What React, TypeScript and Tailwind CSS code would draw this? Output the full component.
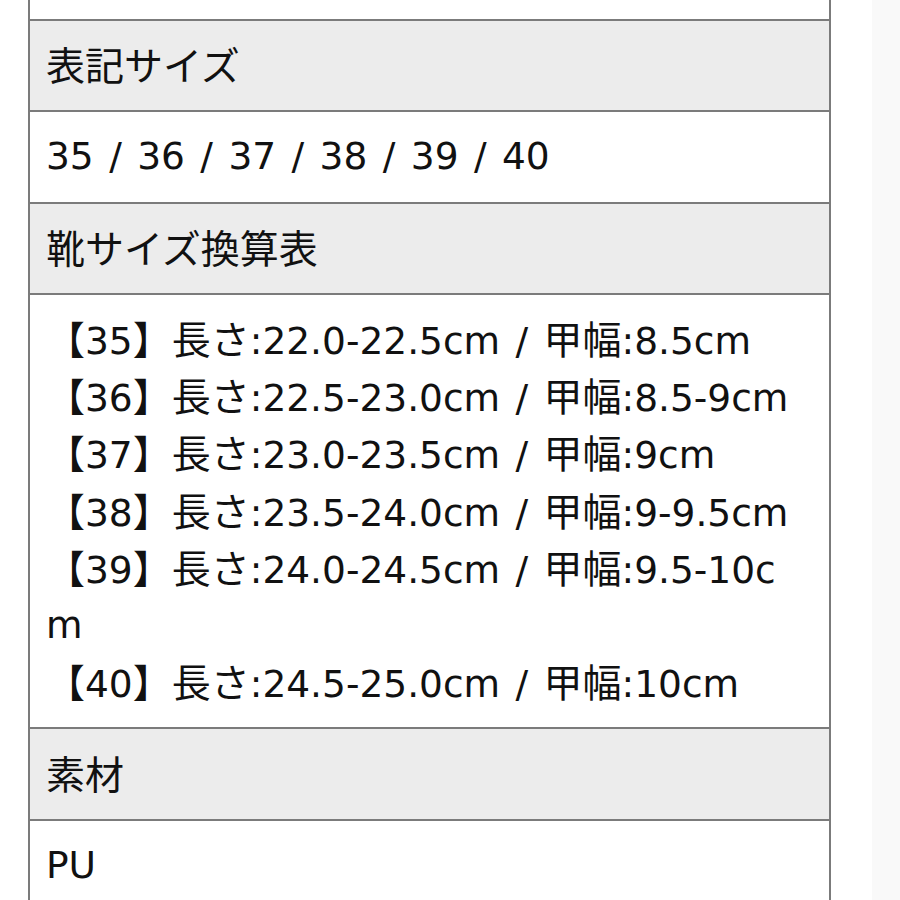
import React from "react";

const font = { fontFamily: '"DejaVu Sans", "Noto Sans CJK JP", sans-serif' };
const CJK = /[\u3000-\u30ff\u4e00-\u9fff\uff00-\uffef]/;

function Mixed({ text }: { text: string }) {
  const parts = text.split(/([\u3000-\u30ff\u4e00-\u9fff\uff00-\uffef]+)/).filter((p) => p.length > 0);
  return (
    <>
      {parts.map((p, i) =>
        CJK.test(p) ? (
          <span key={i} className="text-[39px]" style={{ fontFamily: '"Noto Sans CJK JP", sans-serif' }}>
            {p}
          </span>
        ) : (
          <span key={i}>{p}</span>
        )
      )}
    </>
  );
}

function Row({ text, gray }: { text: string; gray?: boolean }) {
  return (
    <div
      className={`h-[91.5px] shrink-0 flex items-center border-t-2 border-[#7b7b7b] px-4 text-[37.5px] leading-[57px] text-[#111111] [word-spacing:3.5px] ${
        gray ? "bg-[#ececec]" : "bg-white"
      }`}
    >
      <div className="whitespace-nowrap">
        <Mixed text={text} />
      </div>
    </div>
  );
}

export default function App() {
  const lines = [
    "【35】長さ:22.0-22.5cm / 甲幅:8.5cm",
    "【36】長さ:22.5-23.0cm / 甲幅:8.5-9cm",
    "【37】長さ:23.0-23.5cm / 甲幅:9cm",
    "【38】長さ:23.5-24.0cm / 甲幅:9-9.5cm",
    "【39】長さ:24.0-24.5cm / 甲幅:9.5-10c",
    "m",
    "【40】長さ:24.5-25.0cm / 甲幅:10cm",
  ];
  return (
    <div className="w-[900px] h-[900px] bg-white flex overflow-hidden" style={font}>
      <div className="ml-[28px] w-[803px] shrink-0 flex flex-col border-x-2 border-[#7b7b7b]">
        <div className="h-[18.5px] shrink-0 bg-white" />
        <Row text="表記サイズ" gray />
        <Row text="35 / 36 / 37 / 38 / 39 / 40" />
        <Row text="靴サイズ換算表" gray />
        <div className="shrink-0 flex flex-col border-t-2 border-[#7b7b7b] bg-white px-4 py-4 text-[37.5px] text-[#111111] [word-spacing:3.5px]">
          {lines.map((l, i) => (
            <div key={i} className="h-[57.2px] flex items-center whitespace-nowrap leading-[57px]">
              <div>
                <Mixed text={l} />
              </div>
            </div>
          ))}
        </div>
        <Row text="素材" gray />
        <Row text="PU" />
      </div>
      <div className="ml-[41px] w-[28px] shrink-0 bg-[#f9f9f9]" />
    </div>
  );
}
